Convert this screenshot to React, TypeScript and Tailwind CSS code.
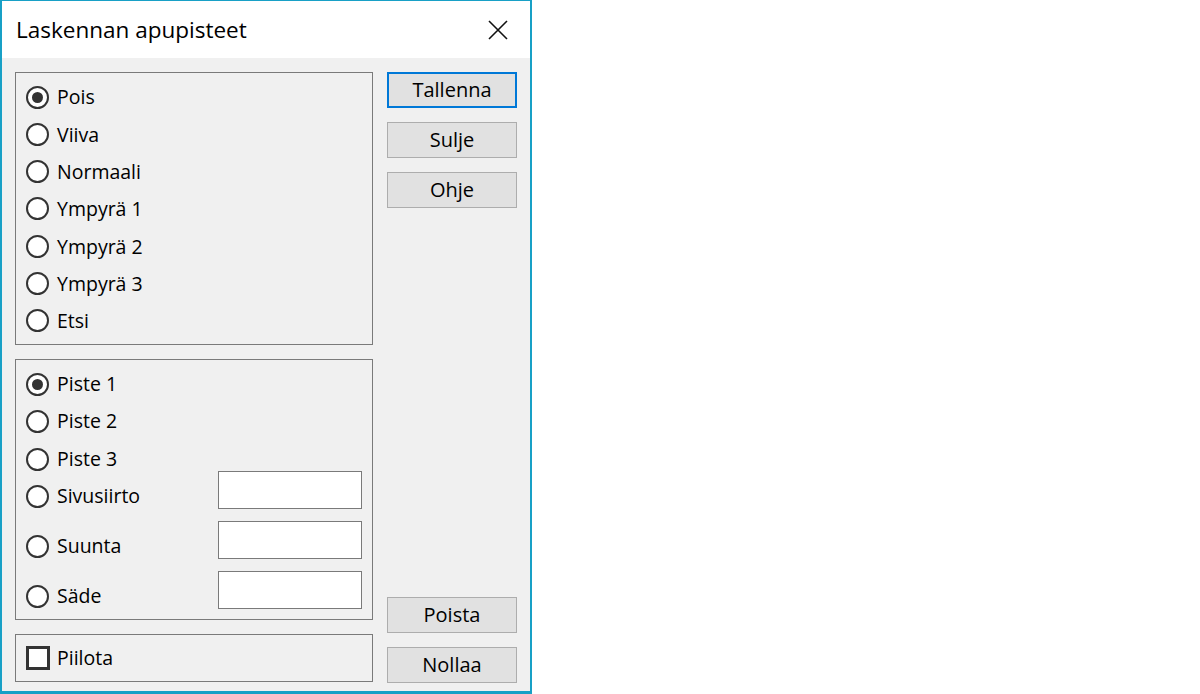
import React from "react";

const font = { fontFamily: '"Open Sans", "Noto Sans", Arial, sans-serif' };

function Radio({ label, checked }: { label: string; checked?: boolean }) {
  return (
    <div className="flex h-[24px] items-center">
      <span className="flex h-[23px] w-[23px] shrink-0 items-center justify-center rounded-full border-2 border-[#333333] bg-white">
        {checked && <span className="h-[11px] w-[11px] rounded-full bg-[#333333]" />}
      </span>
      <span className="ml-[8px] text-[19.5px] leading-none text-black">{label}</span>
    </div>
  );
}

function Button({ label, focused }: { label: string; focused?: boolean }) {
  return (
    <button
      className={
        focused
          ? "flex h-[36px] w-[130px] items-center justify-center border-2 border-[#0078d7] bg-[#e1e1e1] text-[20px] text-black"
          : "flex h-[36px] w-[130px] items-center justify-center border border-[#adadad] bg-[#e1e1e1] text-[20px] text-black"
      }
    >
      {label}
    </button>
  );
}

function TextBox() {
  return <div className="h-[38px] w-[144px] border border-[#7a7a7a] bg-white" />;
}

export default function App() {
  return (
    <div className="h-[694px] w-[1200px] bg-white" style={font}>
      <div className="flex h-[694px] w-[532px] flex-col border-x-2 border-t border-b-[3px] border-[#18a0c6] bg-[#f0f0f0]">
        {/* title bar */}
        <div className="flex h-[57px] shrink-0 items-center justify-between bg-white pl-[14px] pr-[22px]">
          <span className="text-[22.5px] text-black">Laskennan apupisteet</span>
          <svg width="20" height="20" viewBox="0 0 20 20">
            <path d="M1 1 L19 19 M19 1 L1 19" stroke="#111" strokeWidth="1.6" fill="none" />
          </svg>
        </div>

        <div className="flex flex-1 gap-[14px] pl-[13px] pr-[13px] pt-[14px] pb-[8px]">
          {/* left column */}
          <div className="flex w-[358px] flex-col gap-[14px]">
            <div className="flex h-[273px] flex-col gap-[13.33px] border border-[#7a7a7a] pl-[10px] pt-[12px]">
              <Radio label="Pois" checked />
              <Radio label="Viiva" />
              <Radio label="Normaali" />
              <Radio label="Ympyrä 1" />
              <Radio label="Ympyrä 2" />
              <Radio label="Ympyrä 3" />
              <Radio label="Etsi" />
            </div>

            <div className="flex h-[261px] border border-[#7a7a7a] pl-[10px] pr-[10px]">
              <div className="flex flex-1 flex-col pt-[12px]">
                <Radio label="Piste 1" checked />
                <div className="mt-[13px]">
                  <Radio label="Piste 2" />
                </div>
                <div className="mt-[14px]">
                  <Radio label="Piste 3" />
                </div>
                <div className="mt-[13px]">
                  <Radio label="Sivusiirto" />
                </div>
                <div className="mt-[26px]">
                  <Radio label="Suunta" />
                </div>
                <div className="mt-[26px]">
                  <Radio label="Säde" />
                </div>
              </div>
              <div className="flex flex-col gap-[12px] pt-[111px]">
                <TextBox />
                <TextBox />
                <TextBox />
              </div>
            </div>

            <div className="flex h-[48px] items-center border border-[#7a7a7a] pl-[10px]">
              <span className="h-[24px] w-[24px] shrink-0 border-[3px] border-[#333333] bg-white" />
              <span className="ml-[7px] text-[19.5px] leading-none text-black">Piilota</span>
            </div>
          </div>

          {/* right column */}
          <div className="flex w-[130px] flex-col justify-between">
            <div className="flex flex-col gap-[14px]">
              <Button label="Tallenna" focused />
              <Button label="Sulje" />
              <Button label="Ohje" />
            </div>
            <div className="flex flex-col gap-[14px]">
              <Button label="Poista" />
              <Button label="Nollaa" />
            </div>
          </div>
        </div>
      </div>
    </div>
  );
}
